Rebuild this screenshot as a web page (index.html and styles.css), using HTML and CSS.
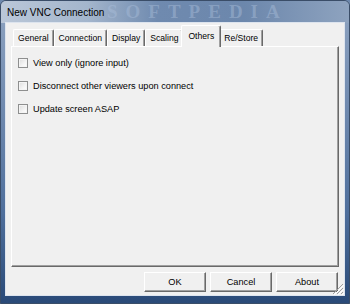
FILE: index.html
```html
<!DOCTYPE html>
<html lang="en">
<head>
  <meta charset="UTF-8">
  <title>New VNC Connection</title>
  <link rel="stylesheet" href="styles.css">
</head>
<body>
  <div class="window">
    <div class="titlebar">
      <span class="title">New VNC Connection</span>
      <span class="watermark">SOFTPEDIA</span>
    </div>
    <div class="client">
      <div class="tabs">
        <div class="tab">General</div>
        <div class="tab">Connection</div>
        <div class="tab">Display</div>
        <div class="tab">Scaling</div>
        <div class="tab active">Others</div>
        <div class="tab">Re/Store</div>
      </div>
      <div class="panel">
        <label class="check"><span class="box"></span>View only (ignore input)</label>
        <label class="check"><span class="box"></span>Disconnect other viewers upon connect</label>
        <label class="check"><span class="box"></span>Update screen ASAP</label>
      </div>
      <div class="buttons">
        <button class="btn">OK</button>
        <button class="btn">Cancel</button>
        <button class="btn">About</button>
      </div>
      <svg class="grip" width="12" height="12" viewBox="0 0 12 12">
        <path d="M11 1 L1 11 M11 5 L5 11 M11 9 L9 11" stroke="#a0a0a0" stroke-width="1"/>
        <path d="M12 2 L2 12 M12 6 L6 12 M12 10 L10 12" stroke="#ffffff" stroke-width="1"/>
      </svg>
    </div>
  </div>
</body>
</html>
```

FILE: styles.css
```css
body {
  margin: 0;
  width: 350px;
  height: 304px;
  overflow: hidden;
  font-family: 'Liberation Sans', Arial, sans-serif;
  background-color: #6d88ad;
}
.window {
  position: relative;
  width: 350px;
  height: 304px;
  box-sizing: border-box;
  display: flex;
  flex-direction: column;
  border: 1px solid #3a4d68;
  border-radius: 6px 6px 0 0;
  background: linear-gradient(180deg, #8fa4c1 0%, #7d95b7 20%, #4f6f9c 70%, #2a4a78 100%);
}
.titlebar {
  position: relative;
  height: 22px;
  display: flex;
  align-items: center;
  padding-left: 6px;
  background: linear-gradient(90deg, #bac7d8 0%, #a3b5cc 25%, #6f8aaf 45%, #6c87ac 70%, #8ea3bf 100%);
  border-radius: 5px 5px 0 0;
}
.title {
  position: relative;
  z-index: 1;
  font-size: 10px;
  color: #000;
}
.watermark {
  position: absolute;
  left: 106px;
  top: 0;
  font-family: 'Liberation Serif', serif;
  font-weight: bold;
  font-size: 19px;
  letter-spacing: 8px;
  color: rgba(170, 190, 218, 0.45);
}
.client {
  position: relative;
  flex: 1;
  display: flex;
  flex-direction: column;
  margin: 0 5px 8px 5px;
  background-color: #f0f0f0;
  box-shadow: 0 0 0 1px #dde4ee;
}
.tabs {
  display: flex;
  align-items: flex-end;
  height: 21px;
  margin-top: 2px;
  padding-left: 7px;
}
.tab {
  position: relative;
  height: 17px;
  box-sizing: border-box;
  padding: 2px 4px 0 4px;
  font-size: 8.6px;
  line-height: 13px;
  color: #000;
  border-top: 1px solid #fff;
  border-left: 1px solid #fff;
  border-right: 1px solid #696969;
  box-shadow: inset -1px 0 #a0a0a0;
  border-radius: 2px 2px 0 0;
}
.tab.active {
  z-index: 1;
  height: 22px;
  margin: 0 -2px -1px -2px;
  padding: 4px 6px 0 6px;
  background-color: #f0f0f0;
}
.panel {
  position: relative;
  flex: 1;
  margin: 0 5px;
  padding: 4px 0 0 6px;
  border-top: 1px solid #fff;
  border-left: 1px solid #fff;
  border-right: 1px solid #696969;
  border-bottom: 1px solid #696969;
  box-shadow: inset -1px -1px #a0a0a0;
}
.check {
  display: flex;
  align-items: center;
  gap: 5px;
  height: 23px;
  font-size: 9.2px;
  color: #000;
}
.box {
  width: 10px;
  height: 10px;
  box-sizing: border-box;
  border: 1px solid #8e8f8f;
  background: linear-gradient(135deg, #dcdcdc 0%, #f4f4f4 60%, #ffffff 100%);
  box-shadow: inset 0 0 0 1px #f4f4f4;
}
.buttons {
  display: flex;
  justify-content: flex-end;
  gap: 4px;
  margin: 5px 6px 3px 0;
}
.btn {
  width: 62px;
  height: 20px;
  padding: 0;
  font-family: 'Liberation Sans', Arial, sans-serif;
  font-size: 9.2px;
  color: #000;
  background-color: #f0f0f0;
  border-top: 1px solid #fff;
  border-left: 1px solid #fff;
  border-right: 1px solid #696969;
  border-bottom: 1px solid #696969;
  box-shadow: inset -1px -1px #a0a0a0;
}
.grip {
  position: absolute;
  right: 0;
  bottom: 0;
}
```
